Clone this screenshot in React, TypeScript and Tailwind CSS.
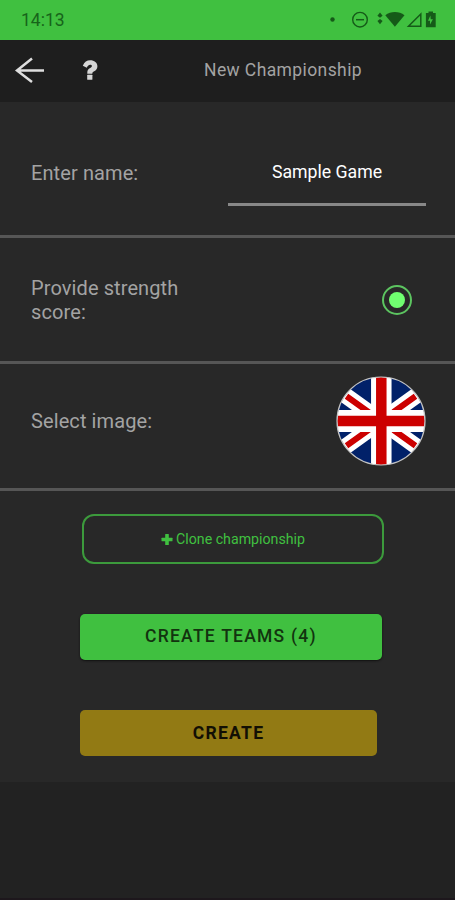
import React from 'react';

const StatusIcons = () => (
  <svg className="h-10 w-[125px]" viewBox="325 0 125 40" fill="none">
    <g fill="#155a18">
      <circle cx="332.5" cy="19.5" r="2.2" />
      {/* data activity */}
      <path d="M380 12.5l2.6 3.2-2.6 2-2.6-2zM380 24.200l2.600-3.200-2.600-2-2.600 2z" />
      {/* wifi */}
      <path d="M385.3 15.2c5.4-4.3 13.8-4.3 19.2 0L394.9 26.800z" />
      {/* battery */}
      <path
        fillRule="evenodd"
        d="M428.500 11.500h4.500v1.600h2.700V27.200h-9.800V13.100h2.600zM430.400 15.500l-2.400 5.200h2v3.800l2.900-5.300h-2.200z"
      />
    </g>
    {/* do not disturb */}
    <circle cx="360" cy="19.700" r="7.300" stroke="#155a18" strokeWidth="1.400" />
    <path d="M356 19.700h8" stroke="#155a18" strokeWidth="1.500" />
    {/* signal */}
    <path d="M408.500 26.200H420.800V14z" stroke="#155a18" strokeWidth="1.500" />
  </svg>
);

const BackArrow = () => (
  <svg className="h-7 w-8" viewBox="0 0 32 28" fill="none" stroke="#dedede" strokeWidth="2.500">
    <path d="M30 14.500H3M18 2.500L3 14.500L18 26" />
  </svg>
);

const QuestionIcon = () => (
  <svg className="h-5 w-4" viewBox="0 0 16 20" fill="#d6d6d6">
    <path d="M.8 5.700C2.400 1.900 4.800.300 8.200.300c4.100 0 7.200 2.500 7.200 5.900 0 2.500-1.300 4-3.200 5.100-1.400.800-1.900 1.200-1.900 2.500H5.300v-1.200c0-2.300 1-3.500 2.900-4.600 1.200-.700 1.700-1.100 1.700-1.900s-.7-1.300-1.800-1.300c-1.400 0-2.100.800-3.300 3z" />
    <rect x="5.200" y="14.800" width="5.200" height="5" rx=".5" />
  </svg>
);

const PlusIcon = () => (
  <svg className="size-3" viewBox="0 0 12 12" fill="currentColor">
    <rect x="4.200" y="0" width="3.600" height="11" rx=".5" />
    <rect x=".500" y="3.700" width="11" height="3.600" rx=".5" />
  </svg>
);

const UnionJack = () => (
  <svg className="size-[90px]" viewBox="-45 -45 90 90">
    <defs>
      <clipPath id="round">
        <circle r="44" />
      </clipPath>
    </defs>
    <g clipPath="url(#round)">
      <path fill="#012169" d="M-45-45h90v90h-90z" />
      <path stroke="#fff" strokeWidth="16" d="M-70-50.400L70 50.400M-70 50.400L70-50.400" />
      {/* the red saltire stops short of the circle's edge */}
      <path stroke="#cc0000" strokeWidth="6" d="M-34.500-24.800L34.500 24.800M-34.500 24.800L34.500-24.800" />
      <path stroke="#fff" strokeWidth="20.500" d="M.3-45V45" />
      <path stroke="#fff" strokeWidth="22" d="M-45 0H45" />
      <path stroke="#cc0000" strokeWidth="10.500" d="M.3-45V45M-45 0H45" />
    </g>
    <circle r="44" fill="none" stroke="#c4c4c4" strokeWidth="1.200" />
  </svg>
);

const App = () => {
  return (
    <div className="flex h-[900px] w-[455px] flex-col border-b-2 border-[#1d171c] bg-[#222222] font-['Roboto',sans-serif] text-[#a3a3a3]">
      {/* Status bar */}
      <div className="flex h-10 items-center justify-between bg-[#40c040] pr-[5px] pl-[21px]">
        <span className="text-[17.500px] text-[#17641a]">14:13</span>
        <StatusIcons />
      </div>

      {/* Header */}
      <header className="flex h-[62px] items-center bg-[#1e1e1e] pb-[2px] pl-[14px]">
        <button aria-label="Back">
          <BackArrow />
        </button>
        <button aria-label="Help" className="ml-[36px]">
          <QuestionIcon />
        </button>
        <h1 className="ml-[106px] text-[17.500px] tracking-[0.400px] whitespace-nowrap">New Championship</h1>
      </header>

      <main className="flex h-[680px] flex-col bg-[#282828]">
        <div className="flex h-[136px] items-start justify-between border-b-3 border-[#565656] pr-[29px] pl-[31px]">
          <label className="pt-[57px] text-[20px] leading-7 tracking-[0.100px]">Enter name:</label>
          <div className="h-[104px] w-[198px] border-b-3 border-[#888888] pt-[56px] text-center text-[17.700px] leading-7 text-white">
            Sample Game
          </div>
        </div>

        <div className="flex h-[126px] items-center justify-between border-b-3 border-[#565656] pr-[43px] pl-[31px]">
          <span className="w-[160px] text-[20px] leading-6 tracking-[0.100px]">Provide strength score:</span>
          <span className="flex size-[30px] items-center justify-center rounded-full border-2 border-[#5cc460]">
            <span className="size-4 rounded-full bg-[#70ff70]" />
          </span>
        </div>

        <div className="flex h-[127px] items-start justify-between border-b-3 border-[#565656] pt-3 pr-[29px] pl-[31px]">
          <span className="pt-[31px] text-[20px] leading-7 tracking-[0.100px]">Select image:</span>
          <UnionJack />
        </div>

        <div className="flex flex-col items-start pt-[23px] pl-20">
          <button className="ml-[2px] flex h-[50px] w-[302px] items-center justify-center gap-[3px] rounded-xl border-2 border-[#3c9a3c] pt-px text-[14.200px] text-[#40c040]">
            <PlusIcon />
            Clone championship
          </button>
          <button className="mt-[50px] h-[46px] w-[302px] rounded-[5px] bg-[#40c040] pb-px text-[17.500px] font-medium tracking-[1.250px] text-[#12330f] shadow-[0_1px_2px_#111]">
            CREATE TEAMS (4)
          </button>
          <button className="mt-[50px] h-[46px] w-[297px] rounded-[5px] bg-[#927a14] text-[17.500px] font-bold tracking-[1.300px] text-[#120f04]">
            CREATE
          </button>
        </div>
      </main>
    </div>
  );
};

export default App;
